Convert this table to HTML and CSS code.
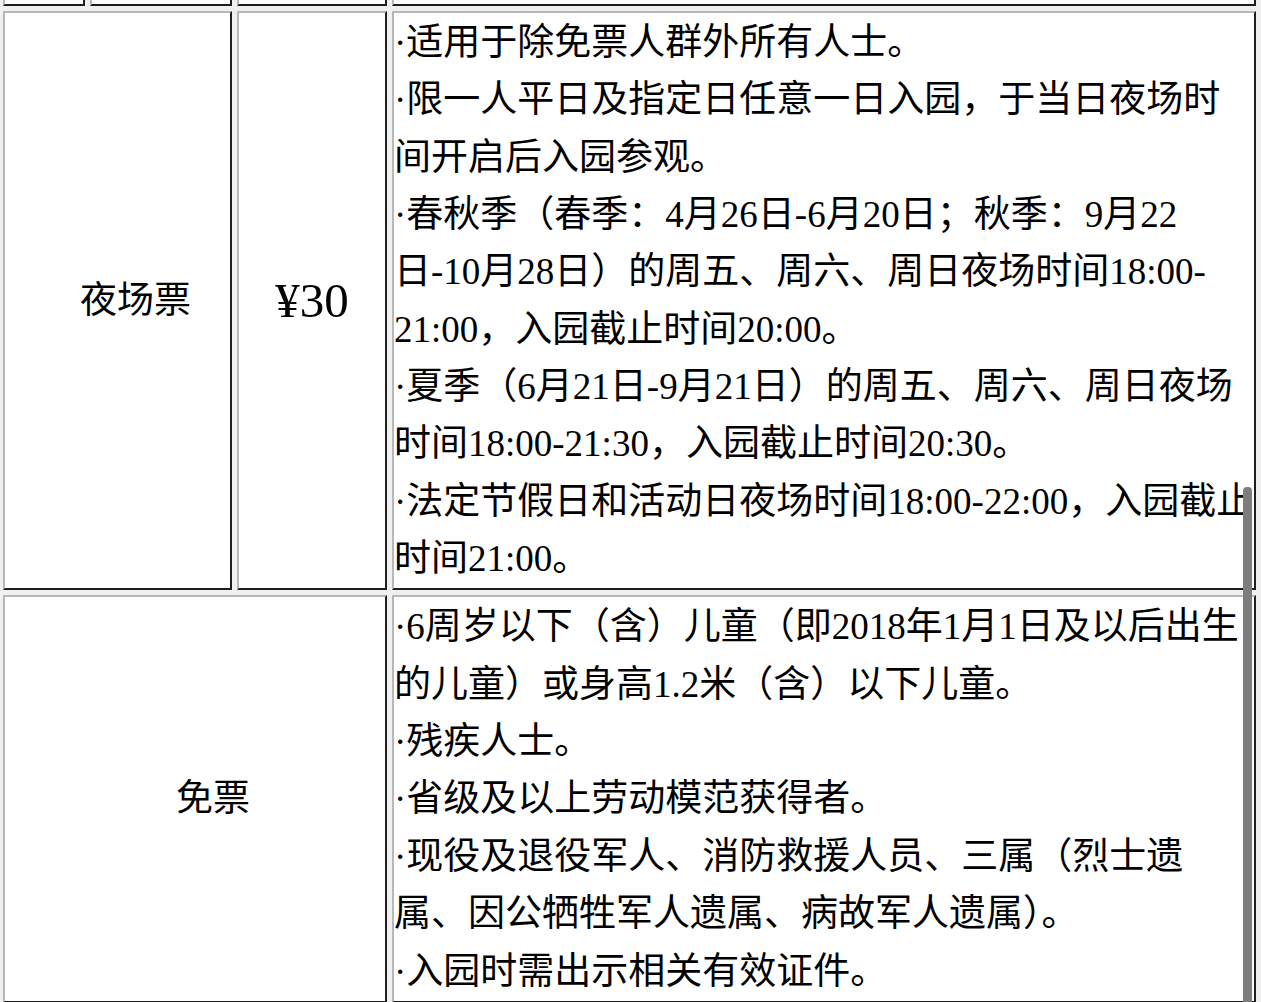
FILE: index.html
```html
<!DOCTYPE html>
<html lang="zh-CN">
<head>
<meta charset="utf-8">
<title>门票</title>
<link rel="stylesheet" href="styles.css">
</head>
<body>
<table class="tickets">
  <colgroup>
    <col class="col-a">
    <col class="col-b">
    <col class="col-c">
    <col class="col-d">
  </colgroup>
  <tr class="prev">
    <td></td><td></td><td></td><td></td>
  </tr>
  <tr>
    <td colspan="2" class="label">夜场票</td>
    <td class="price">¥30</td>
    <td class="desc">·适用于除免票人群外所有人士。<br>·限一人平日及指定日任意一日入园，于当日夜场时<br>间开启后入园参观。<br>·春秋季（春季：4月26日-6月20日；秋季：9月22<br>日-10月28日）的周五、周六、周日夜场时间18:00-<br>21:00，入园截止时间20:00。<br>·夏季（6月21日-9月21日）的周五、周六、周日夜场<br>时间18:00-21:30，入园截止时间20:30。<br>·法定节假日和活动日夜场时间18:00-22:00，入园截止<br>时间21:00。</td>
  </tr>
  <tr>
    <td colspan="3" class="label">免票</td>
    <td class="desc">·6周岁以下（含）儿童（即2018年1月1日及以后出生<br>的儿童）或身高1.2米（含）以下儿童。<br>·残疾人士。<br>·省级及以上劳动模范获得者。<br>·现役及退役军人、消防救援人员、三属（烈士遗<br>属、因公牺牲军人遗属、病故军人遗属）。<br>·入园时需出示相关有效证件。</td>
  </tr>
</table>
<div class="scrollbar"></div>
</body>
</html>
```

FILE: styles.css
```css
html {
  overflow: hidden;
}
body {
  margin: 0;
  background: #f0f0f0;
  color: #000;
  font-family: "Liberation Serif", "Noto Sans CJK SC", serif;
  font-size: 37px;
  line-height: 57.35px;
  text-autospace: no-autospace;
}
.tickets {
  border-collapse: separate;
  border-spacing: 5px;
  table-layout: fixed;
  width: 1263px;
  margin: -33px 0 0 -2px;
}
.col-a { width: 82px; }
.col-b { width: 142px; }
.col-c { width: 150px; }
.col-d { width: 864px; }
.tickets td {
  background: #fff;
  border: 2px solid;
  border-color: #b8b8b8 #1e1e1e #1e1e1e #b8b8b8;
  padding: 1px;
  vertical-align: middle;
}
.prev td {
  height: 30px;
  padding: 0;
}
.label {
  text-align: center;
  padding-left: 37px !important;
}
.price {
  text-align: center;
  font-size: 49px;
}
.desc {
  text-align: left;
  white-space: nowrap;
  padding-left: 0 !important;
}
.scrollbar {
  position: fixed;
  left: 1243px;
  top: 487px;
  width: 9px;
  height: 520px;
  background: #7d7d7d;
  border-radius: 4px;
}
```
